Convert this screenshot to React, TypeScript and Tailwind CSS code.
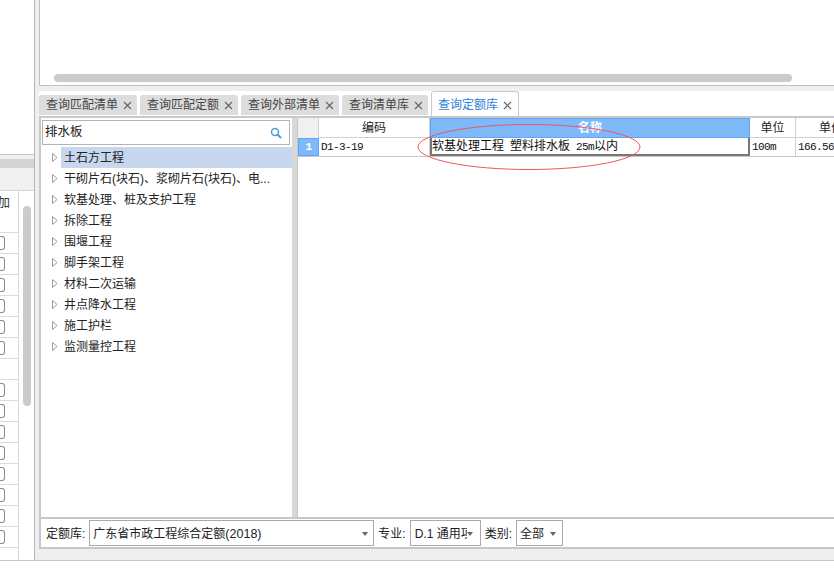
import React from "react";

const font = "[font-family:'Liberation_Sans','Noto_Sans_CJK_SC',sans-serif]";

function X({ c = "#666" }: { c?: string }) {
  return (
    <svg width="9" height="9" viewBox="0 0 9 9" className="shrink-0">
      <path d="M1 1L8 8M8 1L1 8" stroke={c} strokeWidth="1.2" fill="none" />
    </svg>
  );
}

function Tab({ t, w }: { t: string; w: string }) {
  return (
    <div className={`${w} h-[20px] mt-[4px] bg-[#dddddd] rounded-t-[3px] flex items-center justify-between pl-[7px] pr-[5px] text-[12px] leading-none text-[#444]`}>
      <span>{t}</span>
      <X />
    </div>
  );
}

function Caret() {
  return <span className="w-0 h-0 border-x-[3px] border-x-transparent border-t-[4px] border-t-[#666] shrink-0" />;
}

const tree = ["土石方工程", "干砌片石(块石)、浆砌片石(块石)、电...", "软基处理、桩及支护工程", "拆除工程", "围堰工程", "脚手架工程", "材料二次运输", "井点降水工程", "施工护栏", "监测量控工程"];

export default function App() {
  return (
    <div className={`${font} w-[834px] h-[586px] bg-white overflow-hidden`}>
      <div className="flex h-[561px] border-b border-[#c4c7cf] bg-[#efefef]">
        {/* far left */}
        <div className="w-[35px] shrink-0 flex flex-col border-r border-[#b5b5b5] bg-white">
          <div className="h-[155px] shrink-0 border-b border-[#c8c8c8]" />
          <div className="h-[4px] shrink-0 bg-[#efefef]" />
          <div className="h-[9px] shrink-0 bg-[#d4d4d4]" />
          <div className="h-[23px] shrink-0 bg-[#f0f0f0] border-b border-[#d4d4d4]" />
          <div className="flex-1 flex min-h-0">
            <div className="w-[19px] border-r border-[#d9d9d9] flex flex-col overflow-hidden">
              <div className="h-[42px] shrink-0 flex justify-end pr-[8px] pt-[3px] text-[12.5px] text-[#333] border-b border-[#dcdcdc] overflow-hidden"><span className="whitespace-nowrap">加</span></div>
              {[1,1,1,1,1,1,0,1,1,1,1,1,1,1,1,0].map((v, i) => (
                <div key={i} className="h-[21px] shrink-0 border-b border-[#dcdcdc] flex items-center">
                  {v ? <span className="w-[5px] h-[14px] border border-l-0 border-[#8a8a8a] rounded-r-[3px] bg-white" /> : null}
                </div>
              ))}
            </div>
            <div className="flex-1 pl-[4px] pt-[15px]">
              <div className="w-[8px] h-[200px] bg-[#cbcbcb] rounded-[4px]" />
            </div>
          </div>
        </div>

        {/* main */}
        <div className="flex-1 min-w-0 flex flex-col pl-[4px]">
          <div className="h-[86px] shrink-0 bg-white border-l border-b border-[#c0c0c0] pl-[14px] pt-[74px]">
            <div className="w-[738px] h-[8px] rounded-[4px] bg-[#cbcbcb]" />
          </div>
          <div className="h-[5px] shrink-0" />
          <div className="flex-1 min-h-0 bg-white flex flex-col">
            {/* tabs */}
            <div className="h-[25px] shrink-0 flex items-start gap-[3px]">
              <Tab t="查询匹配清单" w="w-[98px]" />
              <Tab t="查询匹配定额" w="w-[98px]" />
              <Tab t="查询外部清单" w="w-[98px]" />
              <Tab t="查询清单库" w="w-[86px]" />
              <div className="w-[88px] h-[25px] border border-b-0 border-[#c8c8c8] rounded-t-[3px] bg-white flex items-center justify-between pl-[6px] pr-[6px] pt-[2px] text-[12px] leading-none text-[#2f7fd8]">
                <span>查询定额库</span>
                <X />
              </div>
            </div>
            {/* content */}
            <div className="flex-1 min-h-0 flex border-t-2 border-[#c8c8c8]">
              <div className="w-[2px] shrink-0 bg-[#c8c8c8]" />
              {/* tree */}
              <div className="w-[251px] shrink-0 flex flex-col">
                <div className="h-[28px] shrink-0 pl-[1px] pr-[2px] pt-[2px]">
                  <div className="h-[25px] border border-[#b4b4b4] flex items-center justify-between pl-[2px] pr-[7px] text-[12.5px] text-[#222]">
                    <span>排水板</span>
                    <svg width="12" height="12" viewBox="0 0 12 12">
                      <circle cx="5" cy="5" r="3.5" stroke="#4a9bd8" strokeWidth="1.5" fill="none" />
                      <path d="M7.5 7.5L11 11" stroke="#4a9bd8" strokeWidth="2" />
                    </svg>
                  </div>
                </div>
                <div className="flex-1 min-h-0 pt-[1px]">
                  {tree.map((t, i) => (
                    <div key={t} className="h-[21px] flex items-center">
                      <div className="w-[20px] shrink-0 flex justify-end pr-[3px]">
                        <svg width="6" height="9" viewBox="0 0 6 9"><path d="M0.5 0.5L5 4.5L0.5 8.5Z" fill="white" stroke="#9a9a9a" /></svg>
                      </div>
                      <div className={`flex-1 h-full flex items-center pl-[3px] text-[12px] text-[#222] whitespace-nowrap ${i === 0 ? "bg-[#c6d7ee]" : ""}`}>{t}</div>
                    </div>
                  ))}
                </div>
              </div>
              <div className="w-[6px] shrink-0 bg-[#d8d8d8] border-r border-[#c8c8c8]" />
              {/* grid */}
              <div className="flex-1 min-w-0 flex flex-col overflow-hidden">
                <div className="flex h-[20px] shrink-0 text-[12px] text-[#222] leading-none">
                  <div className="w-[21px] shrink-0 bg-[#f0f0f0] border-r border-[#d0d0d0]" />
                  <div className="w-[111px] shrink-0 flex items-center justify-center border-r border-b border-[#d0d0d0]">编码</div>
                  <div className="w-[320px] shrink-0 flex items-center justify-center bg-[#7fb9fa] border border-[#5ea6f5] text-white font-bold">名称</div>
                  <div className="w-[46px] shrink-0 flex items-center justify-center border-r border-b border-[#d0d0d0]">单位</div>
                  <div className="w-[70px] shrink-0 flex items-center justify-center border-b border-[#d0d0d0] whitespace-nowrap">单价</div>
                </div>
                <div className="flex h-[19px] shrink-0 text-[11px] tracking-[-0.6px] text-[#111] border-b border-[#c8c8c8] font-['Liberation_Mono','Noto_Sans_CJK_SC',monospace]">
                  <div className="w-[21px] shrink-0 bg-[#7fb9fa] border border-[#5ea6f5] flex items-center justify-center text-white font-bold">1</div>
                  <div className="w-[111px] shrink-0 flex items-center pl-[2px] pt-[1px] border-r border-[#d0d0d0]">D1-3-19</div>
                  <div className="w-[320px] shrink-0 flex items-center pl-0 pt-[2px] border-r-2 border-b-2 border-l-2 border-[#777]">
                    <span className="whitespace-pre"><span className="text-[12px] tracking-normal">软基处理工程</span><span className="tracking-normal text-[10px]"> </span><span className="text-[12px] tracking-normal">塑料排水板</span><span className="tracking-normal text-[10px]"> </span>25m<span className="text-[12px] tracking-normal">以内</span></span>
                  </div>
                  <div className="w-[46px] shrink-0 flex items-center pl-[2px] pt-[1px] border-r border-[#d0d0d0]">100m</div>
                  <div className="w-[70px] shrink-0 flex items-center pl-[2px] pt-[1px] whitespace-nowrap">166.56</div>
                </div>
              </div>
            </div>
            {/* bottom bar */}
            <div className="h-[32px] shrink-0 border-y-2 border-[#c4c7cc] border-l-2 flex items-center pl-[5px] text-[12px] text-[#222] whitespace-nowrap">
              <span className="mr-[4px] pt-[2px]">定额库:</span>
              <div className="w-[285px] h-[26px] border border-[#aaa] flex items-center justify-between pl-[3px] pr-[5px] pt-[2px]"><span>广东省市政工程综合定额<span className="text-[12.5px]">(2018)</span></span><Caret /></div>
              <span className="ml-[4px] mr-[4px] pt-[2px]">专业:</span>
              <div className="w-[71px] h-[26px] border border-[#aaa] flex items-center pl-[4px] pr-[5px] pt-[2px]"><span className="w-[52px] overflow-hidden">D.1 通用项目</span><Caret /></div>
              <span className="ml-[4px] mr-[4px] pt-[2px]">类别:</span>
              <div className="w-[47px] h-[26px] border border-[#aaa] flex items-center justify-between pl-[3px] pr-[6px] pt-[2px]"><span>全部</span><Caret /></div>
            </div>
            <div className="h-[11px] shrink-0 bg-[#efefef]" />
          </div>
        </div>
      </div>
      {/* annotation: hand-drawn ellipse over the grid */}
      <svg className="absolute left-[410px] top-[118px]" width="240" height="60" viewBox="0 0 240 60">
        <ellipse cx="119" cy="29" rx="111" ry="22.5" fill="none" stroke="#ee5560" strokeWidth="1" />
      </svg>
    </div>
  );
}
